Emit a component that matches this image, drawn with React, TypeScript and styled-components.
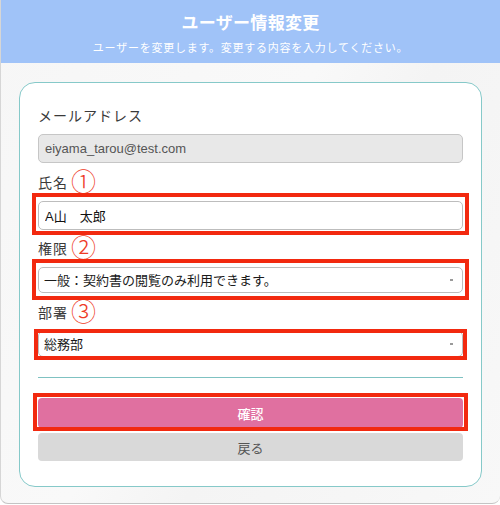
import React from "react";
import styled, { createGlobalStyle } from "styled-components";

const GlobalStyle = createGlobalStyle`
  html, body { margin: 0; padding: 0; background: #ffffff; }
  body { font-family: "Noto Sans CJK JP", "Noto Sans", sans-serif; }
  * { box-sizing: border-box; }
`;

const Page = styled.div`
  width: 500px;
  height: 504px;
  background: linear-gradient(120deg, #f6f6f6 0%, #f9f9f9 45%, #f4f4f4 60%, #f8f8f8 100%);
  border-bottom: 1px solid #c4c4c4;
  border-left: 1px solid #d6d6d6;
  border-radius: 0 0 8px 8px;
  overflow: hidden;
`;

const Header = styled.header`
  height: 63px;
  background: #a0c3f8;
  color: #ffffff;
  display: flex;
  flex-direction: column;
  align-items: center;
  padding-top: 10px;
`;

const Title = styled.h1`
  margin: 0;
  font-size: 17px;
  font-weight: 700;
  line-height: 24px;
  letter-spacing: 0.3px;
`;

const Subtitle = styled.p`
  margin: 5px 0 0;
  font-size: 11px;
  line-height: 16px;
  letter-spacing: 0.75px;
`;

const Card = styled.section`
  margin: 19px 0 0 18px;
  width: 463px;
  background: #ffffff;
  border: 1px solid #86c9c9;
  border-radius: 16px;
  padding: 20px 18px 25px;
  display: flex;
  flex-direction: column;
`;

const LabelRow = styled.div<{ $top?: number }>`
  display: flex;
  align-items: center;
  height: 24px;
  margin-top: ${(p) => p.$top ?? 0}px;
  margin-bottom: 7px;
  gap: 3px;
`;

const Label = styled.label`
  font-size: 14px;
  color: #3a3a3a;
  letter-spacing: 1px;
  font-weight: 400;
`;

const Num = styled.span`
  font-size: 25px;
  line-height: 24px;
  color: #ee3b26;
  font-weight: 300;
  margin-top: -5px;
`;

const Mark = styled.div<{ $t: number; $r: number; $b: number; $l: number }>`
  position: relative;
  &::before {
    content: "";
    position: absolute;
    top: ${(p) => p.$t}px;
    right: ${(p) => p.$r}px;
    bottom: ${(p) => p.$b}px;
    left: ${(p) => p.$l}px;
    border: 4px solid #f2290f;
    z-index: 2;
    pointer-events: none;
  }
`;

const TextInput = styled.input<{ $disabled?: boolean }>`
  display: block;
  width: 100%;
  height: 29px;
  padding: 0 6px;
  border: 1px solid ${(p) => (p.$disabled ? "#c6c6c6" : "#bdbdbd")};
  border-radius: 5px;
  background: ${(p) => (p.$disabled ? "#e8e8e8" : "#ffffff")};
  color: ${(p) => (p.$disabled ? "#555555" : "#111111")};
  font-family: "Liberation Sans", "Noto Sans CJK JP", sans-serif;
  font-size: 13px;
  outline: none;
`;

const SelectWrap = styled.div`
  position: relative;
  &::after {
    content: "";
    position: absolute;
    right: 10px;
    top: 50%;
    width: 3px;
    height: 2px;
    margin-top: -1px;
    background: #9a9a9a;
  }
`;

const Select = styled.select`
  display: block;
  width: 100%;
  height: 26px;
  padding: 0 5px;
  appearance: none;
  -webkit-appearance: none;
  border: 1px solid #bdbdbd;
  border-radius: 5px;
  background: #ffffff;
  color: #1a1a1a;
  font-family: "Liberation Sans", "Noto Sans CJK JP", sans-serif;
  font-size: 13px;
  outline: none;
`;

const Divider = styled.hr`
  margin: 20px 0 20px;
  border: none;
  border-top: 1px solid #7fc2c2;
  height: 0;
`;

const Button = styled.button<{ $primary?: boolean }>`
  display: block;
  width: 100%;
  height: ${(p) => (p.$primary ? 30 : 28)}px;
  margin-top: ${(p) => (p.$primary ? 0 : 5)}px;
  border: none;
  border-radius: 4px;
  background: ${(p) => (p.$primary ? "#e070a0" : "#d9d9d9")};
  color: ${(p) => (p.$primary ? "#ffffff" : "#555555")};
  font-family: "Noto Sans CJK JP", sans-serif;
  font-size: 13px;
  font-weight: ${(p) => (p.$primary ? 500 : 400)};
  cursor: pointer;
`;

export default function App() {
  return (
    <>
      <GlobalStyle />
      <Page>
        <Header>
          <Title>ユーザー情報変更</Title>
          <Subtitle>ユーザーを変更します。変更する内容を入力してください。</Subtitle>
        </Header>
        <Card>
          <LabelRow>
            <Label>メールアドレス</Label>
          </LabelRow>
          <TextInput $disabled readOnly value="eiyama_tarou@test.com" />

          <LabelRow $top={7}>
            <Label>氏名</Label>
            <Num>①</Num>
          </LabelRow>
          <Mark $t={-8} $r={-6} $b={-5} $l={-6}>
            <TextInput readOnly value="A山　太郎" />
          </Mark>

          <LabelRow $top={6}>
            <Label>権限</Label>
            <Num>②</Num>
          </LabelRow>
          <Mark $t={-8} $r={-6} $b={-7} $l={-6}>
            <SelectWrap>
              <Select defaultValue="general">
                <option value="general">一般：契約書の閲覧のみ利用できます。</option>
              </Select>
            </SelectWrap>
          </Mark>

          <LabelRow $top={7}>
            <Label>部署</Label>
            <Num>③</Num>
          </LabelRow>
          <Mark $t={-2} $r={-4} $b={-3} $l={-4}>
            <SelectWrap>
              <Select defaultValue="soumu">
                <option value="soumu">総務部</option>
              </Select>
            </SelectWrap>
          </Mark>

          <Divider />

          <Mark $t={-5} $r={-5} $b={-3} $l={-5}>
            <Button $primary>確認</Button>
          </Mark>
          <Button>戻る</Button>
        </Card>
      </Page>
    </>
  );
}
